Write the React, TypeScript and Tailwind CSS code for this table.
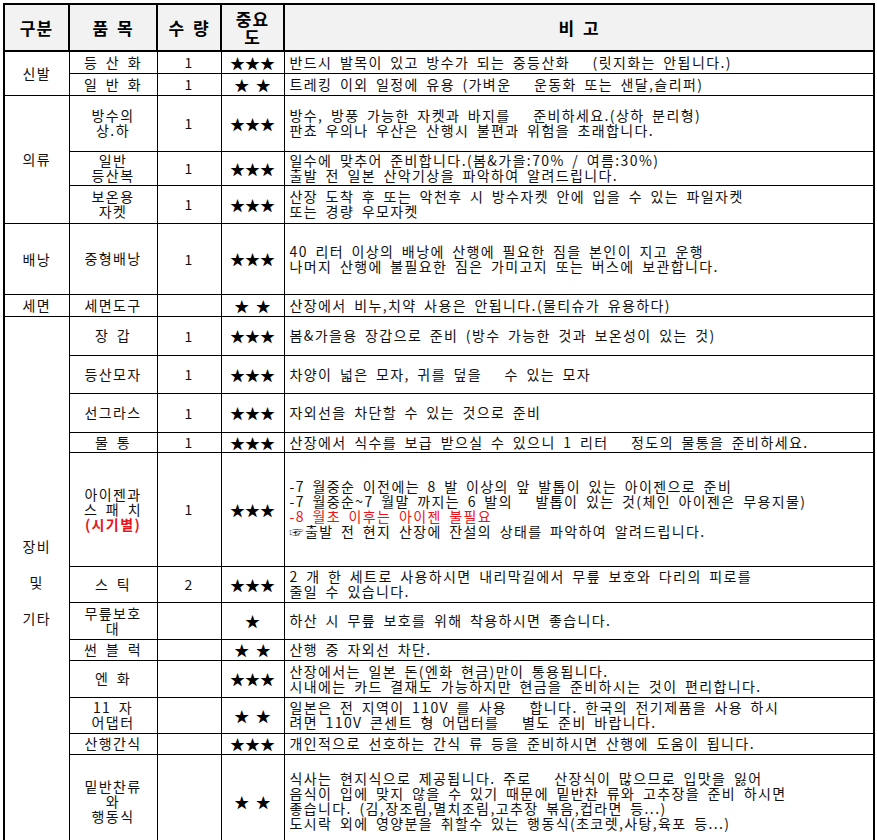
type Row = {
  h: number;
  item: React.ReactNode;
  qty?: string;
  stars: string;
  note: React.ReactNode;
};

type Group = { label: React.ReactNode; rows: Row[] };

const red = "text-[#e8141b]";

const groups: Group[] = [
  {
    label: "신발",
    rows: [
      { h: 22, item: "등 산 화", qty: "1", stars: "★★★", note: "반드시 발목이 있고 방수가 되는 중등산화   (릿지화는 안됩니다.)" },
      { h: 22, item: "일 반 화", qty: "1", stars: "★ ★", note: "트레킹 이외 일정에 유용 (가벼운   운동화 또는 샌달,슬리퍼)" },
    ],
  },
  {
    label: "의류",
    rows: [
      {
        h: 56,
        item: <>방수의<br />상.하</>,
        qty: "1",
        stars: "★★★",
        note: <>방수, 방풍 가능한 자켓과 바지를   준비하세요.(상하 분리형)<br />판쵸 우의나 우산은 산행시 불편과 위험을 초래합니다.</>,
      },
      {
        h: 34,
        item: <>일반<br />등산복</>,
        qty: "1",
        stars: "★★★",
        note: <>일수에 맞추어 준비합니다.(봄&가을:70% / 여름:30%)<br />출발 전 일본 산악기상을 파악하여 알려드립니다.</>,
      },
      {
        h: 38,
        item: <>보온용<br />자켓</>,
        qty: "1",
        stars: "★★★",
        note: <>산장 도착 후 또는 악천후 시 방수자켓 안에 입을 수 있는 파일자켓<br />또는 경량 우모자켓</>,
      },
    ],
  },
  {
    label: "배낭",
    rows: [
      {
        h: 71,
        item: "중형배낭",
        qty: "1",
        stars: "★★★",
        note: <>40 리터 이상의 배낭에 산행에 필요한 짐을 본인이 지고 운행<br />나머지 산행에 불필요한 짐은 가미고지 또는 버스에 보관합니다.</>,
      },
    ],
  },
  {
    label: "세면",
    rows: [{ h: 22, item: "세면도구", stars: "★ ★", note: "산장에서 비누,치약 사용은 안됩니다.(물티슈가 유용하다)" }],
  },
  {
    label: (
      <div className="flex flex-col items-center leading-[36px]">
        <span>장비</span>
        <span>및</span>
        <span>기타</span>
      </div>
    ),
    rows: [
      { h: 39, item: "장 갑", qty: "1", stars: "★★★", note: "봄&가을용 장갑으로 준비 (방수 가능한 것과 보온성이 있는 것)" },
      { h: 38, item: "등산모자", qty: "1", stars: "★★★", note: "차양이 넓은 모자, 귀를 덮을   수 있는 모자" },
      { h: 39, item: "선그라스", qty: "1", stars: "★★★", note: "자외선을 차단할 수 있는 것으로 준비" },
      { h: 20, item: "물 통", qty: "1", stars: "★★★", note: "산장에서 식수를 보급 받으실 수 있으니 1 리터   정도의 물통을 준비하세요." },
      {
        h: 114,
        item: (
          <>
            아이젠과
            <br />
            스 패 치
            <br />
            <span className={`${red} font-bold`}>(시기별)</span>
          </>
        ),
        qty: "1",
        stars: "★★★",
        note: (
          <>
            -7 월중순 이전에는 8 발 이상의 앞 발톱이 있는 아이젠으로 준비
            <br />
            -7 월중순~7 월말 까지는 6 발의   발톱이 있는 것(체인 아이젠은 무용지물)
            <br />
            <span className={red}>-8 월초 이후는 아이젠 불필요</span>
            <br />
            ☞출발 전 현지 산장에 잔설의 상태를 파악하여 알려드립니다.
          </>
        ),
      },
      {
        h: 36,
        item: "스 틱",
        qty: "2",
        stars: "★★★",
        note: <>2 개 한 세트로 사용하시면 내리막길에서 무릎 보호와 다리의 피로를<br />줄일 수 있습니다.</>,
      },
      { h: 37, item: <>무릎보호<br />대</>, stars: "★", note: "하산 시 무릎 보호를 위해 착용하시면 좋습니다." },
      { h: 21, item: "썬 블 럭", stars: "★ ★", note: "산행 중 자외선 차단." },
      {
        h: 37,
        item: "엔 화",
        stars: "★★★",
        note: <>산장에서는 일본 돈(엔화 현금)만이 통용됩니다.<br />시내에는 카드 결재도 가능하지만 현금을 준비하시는 것이 편리합니다.</>,
      },
      {
        h: 36,
        item: <>11 자<br />어댑터</>,
        stars: "★ ★",
        note: <>일본은 전 지역이 110V 를 사용   합니다. 한국의 전기제품을 사용 하시<br />려면 110V 콘센트 형 어댑터를   별도 준비 바랍니다.</>,
      },
      { h: 21, item: "산행간식", stars: "★★★", note: "개인적으로 선호하는 간식 류 등을 준비하시면 산행에 도움이 됩니다." },
      {
        h: 95,
        item: <>밑반찬류<br />와<br />행동식</>,
        stars: "★ ★",
        note: (
          <>
            식사는 현지식으로 제공됩니다. 주로   산장식이 많으므로 입맛을 잃어
            <br />
            음식이 입에 맞지 않을 수 있기 때문에 밑반찬 류와 고추장을 준비 하시면
            <br />
            좋습니다. (김,장조림,멸치조림,고추장 볶음,컵라면 등...)
            <br />
            도시락 외에 영양분을 취할수 있는 행동식(초코렛,사탕,육포 등...)
          </>
        ),
      },
    ],
  },
];

const cell = "border border-black p-0 align-middle";

export default function App() {
  return (
    <div className="bg-white min-h-[840px] pl-[3px] pt-[3px] font-['Noto_Sans_CJK_KR','DejaVu_Sans',sans-serif] text-[#111] text-[14px] leading-[14px] tracking-[1.4px] [word-spacing:3px]">
      <table className="table-fixed border-collapse border-2 border-black w-[870px]">
        <colgroup>
          <col className="w-[65px]" />
          <col className="w-[88px]" />
          <col className="w-[64px]" />
          <col className="w-[63px]" />
          <col className="w-[590px]" />
        </colgroup>
        <thead>
          <tr className="h-[47px] bg-[#f2f2f2] font-bold text-[17px] leading-[18px] text-black tracking-[1px]">
            <th className={`${cell} border-2`}>구분</th>
            <th className={`${cell} border-2`}>품 목</th>
            <th className={`${cell} border-2`}>수 량</th>
            <th className={`${cell} border-2`}>
              중요
              <br />
              도
            </th>
            <th className={`${cell} border-2`}>비 고</th>
          </tr>
        </thead>
        <tbody>
          {groups.map((g, gi) =>
            g.rows.map((r, ri) => (
              <tr key={`${gi}-${ri}`} style={{ height: r.h }}>
                {ri === 0 && (
                  <td rowSpan={g.rows.length} className={`${cell} text-center`}>
                    {g.label}
                  </td>
                )}
                <td className={`${cell} text-center leading-[15px]`}>{r.item}</td>
                <td className={`${cell} text-center`}>{r.qty}</td>
                <td className={`${cell} text-center text-[15px] leading-[15px] tracking-[0px] text-black`}>{r.stars}</td>
                <td className={`${cell} pl-[5px] whitespace-pre leading-[15px]`}>{r.note}</td>
              </tr>
            ))
          )}
        </tbody>
      </table>
    </div>
  );
}
